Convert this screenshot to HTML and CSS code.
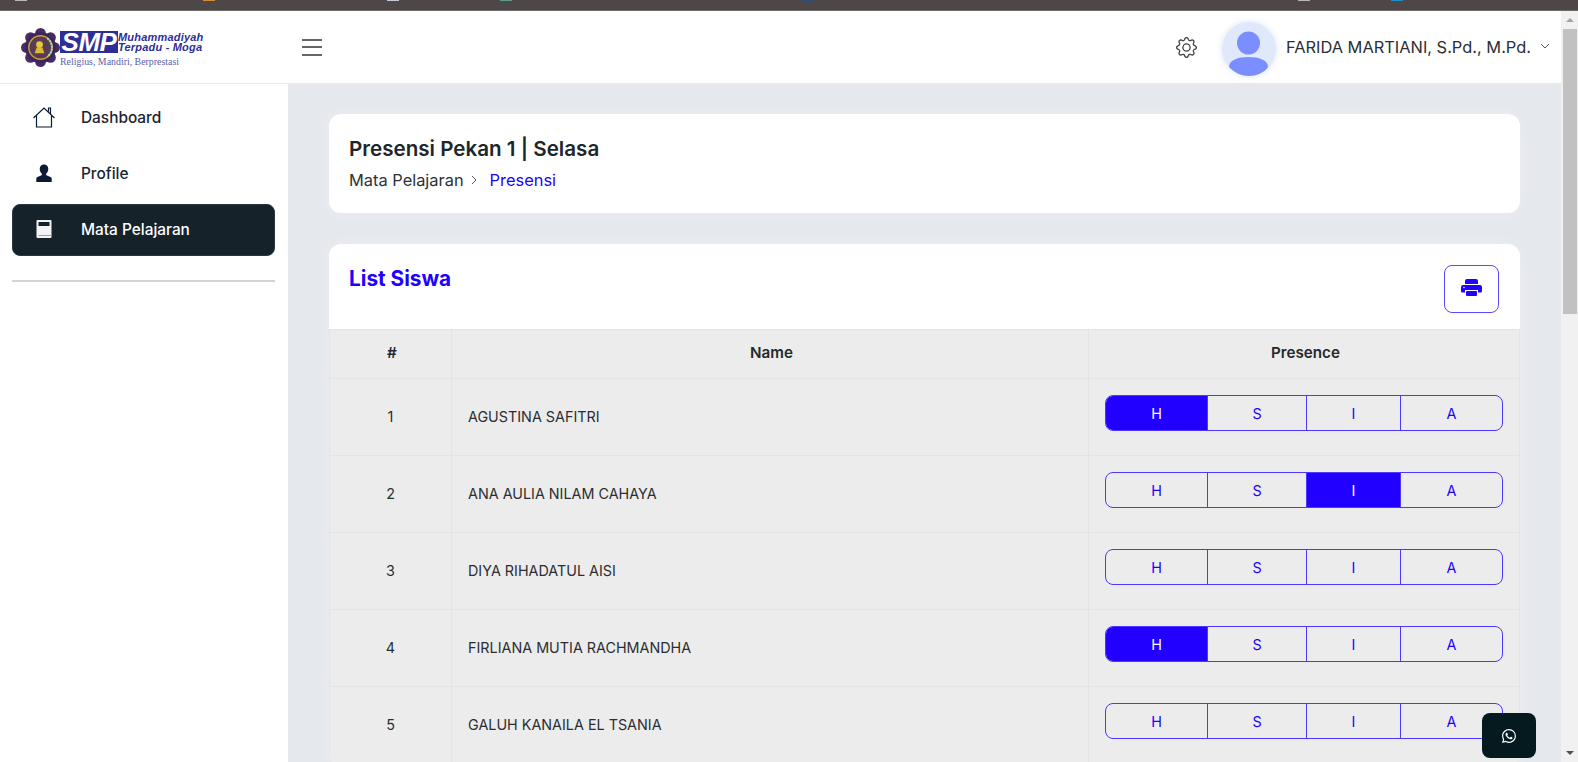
FILE: index.html
```html
<!DOCTYPE html>
<html lang="id">
<head>
  <meta charset="UTF-8">
  <title>Presensi</title>
  <link rel="stylesheet" href="styles.css">
</head>
<body>

<div class="strip"></div>

<div class="window">
  <div class="page">

    <!-- Header -->
    <header class="topbar">
      <div class="brand">
        <svg class="emblem" viewBox="0 0 40 40">
          <g fill="#4a2c63">
            <circle cx="20" cy="5.500" r="5.500"/><circle cx="30.250" cy="9.750" r="5.500"/><circle cx="34.500" cy="20" r="5.500"/><circle cx="30.250" cy="30.250" r="5.500"/>
            <circle cx="20" cy="34.500" r="5.500"/><circle cx="9.750" cy="30.250" r="5.500"/><circle cx="5.500" cy="20" r="5.500"/><circle cx="9.750" cy="9.750" r="5.500"/>
          </g>
          <circle cx="20" cy="20" r="16" fill="#3b2560"/>
          <circle cx="20" cy="20" r="12" fill="#5a3a55" stroke="#c9a227" stroke-width="1.500"/>
          <path d="M27 10.500a12 12 0 0 1 0 19" fill="none" stroke="#9be6bd" stroke-width="2" stroke-dasharray="2 1"/>
          <circle cx="19" cy="17" r="3.500" fill="#e6c83f"/>
          <path d="M14 26l2-6h6l2 6z" fill="#dcb92f"/>
        </svg>
        <div class="brand-text">
          <div class="brand-top">
            <span class="brand-smp">SMP</span>
            <span class="brand-name">Muhammadiyah<br>Terpadu - Moga</span>
          </div>
          <div class="brand-motto">Religius, Mandiri, Berprestasi</div>
        </div>
      </div>

      <button class="burger" aria-label="Menu"><span></span><span></span><span></span></button>

      <div class="topbar-right">
        <svg class="gear" viewBox="0 0 16 16" fill="#444">
          <path d="M8 4.754a3.246 3.246 0 1 0 0 6.492 3.246 3.246 0 0 0 0-6.492zM5.754 8a2.246 2.246 0 1 1 4.492 0 2.246 2.246 0 0 1-4.492 0z"/>
          <path d="M9.796 1.343c-.527-1.790-3.065-1.790-3.592 0l-.094.319a.873.873 0 0 1-1.255.520l-.292-.160c-1.640-.892-3.433.902-2.540 2.541l.159.292a.873.873 0 0 1-.520 1.255l-.319.094c-1.790.527-1.790 3.065 0 3.592l.319.094a.873.873 0 0 1 .520 1.255l-.160.292c-.892 1.640.901 3.434 2.541 2.540l.292-.159a.873.873 0 0 1 1.255.520l.094.319c.527 1.790 3.065 1.790 3.592 0l.094-.319a.873.873 0 0 1 1.255-.520l.292.160c1.640.893 3.434-.902 2.540-2.541l-.159-.292a.873.873 0 0 1 .520-1.255l.319-.094c1.790-.527 1.790-3.065 0-3.592l-.319-.094a.873.873 0 0 1-.520-1.255l.160-.292c.893-1.640-.902-3.433-2.541-2.540l-.292.159a.873.873 0 0 1-1.255-.520l-.094-.319zm-2.633.283c.246-.835 1.428-.835 1.674 0l.094.319a1.873 1.873 0 0 0 2.693 1.115l.291-.160c.764-.415 1.600.420 1.184 1.185l-.159.292a1.873 1.873 0 0 0 1.116 2.692l.318.094c.835.246.835 1.428 0 1.674l-.319.094a1.873 1.873 0 0 0-1.115 2.693l.160.291c.415.764-.420 1.600-1.185 1.184l-.291-.159a1.873 1.873 0 0 0-2.693 1.116l-.094.318c-.246.835-1.428.835-1.674 0l-.094-.319a1.873 1.873 0 0 0-2.692-1.115l-.292.160c-.764.415-1.600-.420-1.184-1.185l.159-.291A1.873 1.873 0 0 0 1.945 8.930l-.319-.094c-.835-.246-.835-1.428 0-1.674l.319-.094A1.873 1.873 0 0 0 3.060 4.377l-.160-.292c-.415-.764.420-1.600 1.185-1.184l.292.159a1.873 1.873 0 0 0 2.692-1.115l.094-.319z"/>
        </svg>
        <div class="avatar">
          <svg viewBox="0 0 54 54">
            <circle cx="26.500" cy="21" r="11.500" fill="#7b8eff"/>
            <path d="M7 45c0-7 9-10 19.500-10S46 38 46 45c-3 6-11 10-19.500 10S10 51 7 45z" fill="#7b8eff"/>
          </svg>
        </div>
        <span class="user-name">FARIDA MARTIANI, S.Pd., M.Pd.</span>
        <svg class="chevron" viewBox="0 0 10 6"><path d="M1 1l4 4 4-4" fill="none" stroke="#555" stroke-width="1"/></svg>
      </div>
    </header>

    <div class="body-row">

      <!-- Sidebar -->
      <aside class="sidebar">
        <nav class="menu">
          <a class="menu-item">
            <svg class="menu-icon" viewBox="0 0 24 24" fill="none" stroke="#0b1b34" stroke-width="1.200">
              <path d="M1.500 13L12 3l10.500 10M4.500 10.500V22h15V10.500M16.500 6.500V3h2v6"/>
            </svg>
            Dashboard
          </a>
          <a class="menu-item">
            <svg class="menu-icon" viewBox="0 0 24 24" fill="#0b1b34">
              <path d="M12 3.500c2.700 0 4.300 2 4.300 4.600 0 1.900-.8 3.500-2.100 4.500v1.300c0 .7 4.500 1.300 5.500 3V21H4.300v-4.100c1-1.700 5.500-2.300 5.500-3v-1.300C8.500 11.600 7.700 10 7.700 8.100c0-2.600 1.600-4.600 4.300-4.600z"/>
            </svg>
            Profile
          </a>
          <a class="menu-item active">
            <svg class="menu-icon" viewBox="0 0 24 24">
              <rect x="4.500" y="3" width="15" height="18" rx="1" fill="#f4f4f4"/>
              <rect x="6.500" y="5" width="11" height="4" fill="#15222a"/>
              <rect x="6.500" y="18" width="13" height="1" fill="#9aa3a8"/>
            </svg>
            Mata Pelajaran
          </a>
        </nav>
        <hr class="menu-divider">
      </aside>

      <!-- Isi -->
      <main class="content">
        <section class="card title-card">
          <h1>Presensi Pekan 1 | Selasa</h1>
          <div class="crumbs">
            <span>Mata Pelajaran</span>
            <svg class="crumb-sep" viewBox="0 0 6 10"><path d="M1 1l4 4-4 4" fill="none" stroke="#555" stroke-width="1"/></svg>
            <a>Presensi</a>
          </div>
        </section>

        <section class="card list-card">
          <div class="list-head">
            <h2>List Siswa</h2>
            <button class="print-btn" aria-label="Print">
              <svg viewBox="0 0 21 17" fill="#2200ff">
                <path d="M4 5V2a2 2 0 0 1 2-2h9a2 2 0 0 1 2 2v3z"/>
                <path d="M2 6h17a2 2 0 0 1 2 2v4a1.500 1.500 0 0 1-1.500 1.500H17V11H4v2.500H1.500A1.500 1.500 0 0 1 0 12V8a2 2 0 0 1 2-2z"/>
                <rect x="5" y="12" width="11" height="5" rx="1"/>
                <circle cx="3" cy="8.500" r=".8" fill="#fff"/>
              </svg>
            </button>
          </div>

          <table class="siswa">
            <thead>
              <tr><th class="col-no">#</th><th class="col-name">Name</th><th class="col-pres">Presence</th></tr>
            </thead>
            <tbody>
              <tr>
                <td class="col-no">1</td>
                <td class="student">AGUSTINA SAFITRI</td>
                <td><div class="presence"><button class="on">H</button><button>S</button><button>I</button><button>A</button></div></td>
              </tr>
              <tr>
                <td class="col-no">2</td>
                <td class="student">ANA AULIA NILAM CAHAYA</td>
                <td><div class="presence"><button>H</button><button>S</button><button class="on">I</button><button>A</button></div></td>
              </tr>
              <tr>
                <td class="col-no">3</td>
                <td class="student">DIYA RIHADATUL AISI</td>
                <td><div class="presence"><button>H</button><button>S</button><button>I</button><button>A</button></div></td>
              </tr>
              <tr>
                <td class="col-no">4</td>
                <td class="student">FIRLIANA MUTIA RACHMANDHA</td>
                <td><div class="presence"><button class="on">H</button><button>S</button><button>I</button><button>A</button></div></td>
              </tr>
              <tr>
                <td class="col-no">5</td>
                <td class="student">GALUH KANAILA EL TSANIA</td>
                <td><div class="presence"><button>H</button><button>S</button><button>I</button><button>A</button></div></td>
              </tr>
            </tbody>
          </table>
        </section>
      </main>
    </div>
  </div>

  <!-- Scrollbar -->
  <div class="scrollbar">
    <span class="arrow-up"></span>
    <span class="thumb"></span>
    <span class="arrow-down"></span>
  </div>
</div>

<a class="wa-btn" aria-label="WhatsApp">
  <svg viewBox="0 0 16 16" fill="#fff">
    <path d="M13.601 2.326A7.854 7.854 0 0 0 7.994 0C3.627 0 .068 3.558.064 7.926c0 1.399.366 2.760 1.057 3.965L0 16l4.204-1.102a7.933 7.933 0 0 0 3.790.965h.004c4.368 0 7.926-3.558 7.930-7.930A7.898 7.898 0 0 0 13.600 2.326zM7.994 14.521a6.573 6.573 0 0 1-3.356-.920l-.240-.144-2.494.654.666-2.433-.156-.251a6.560 6.560 0 0 1-1.007-3.505c0-3.626 2.957-6.584 6.591-6.584a6.560 6.560 0 0 1 4.660 1.931 6.557 6.557 0 0 1 1.928 4.660c-.004 3.639-2.961 6.592-6.592 6.592zm3.615-4.934c-.197-.099-1.170-.578-1.353-.646-.182-.065-.315-.099-.445.099-.133.197-.513.646-.627.775-.114.133-.232.148-.430.050-.197-.100-.836-.308-1.592-.985-.590-.525-.985-1.175-1.103-1.372-.114-.198-.011-.304.088-.403.087-.088.197-.232.296-.346.100-.114.133-.198.198-.330.065-.134.034-.248-.015-.347-.050-.099-.445-1.076-.612-1.470-.160-.389-.323-.335-.445-.340-.114-.007-.247-.007-.380-.007a.729.729 0 0 0-.529.247c-.182.198-.691.677-.691 1.654 0 .977.710 1.916.810 2.049.098.133 1.394 2.132 3.383 2.992.470.205.840.326 1.129.418.475.152.904.129 1.246.080.380-.058 1.171-.480 1.338-.943.164-.464.164-.860.114-.943-.049-.084-.182-.133-.380-.232z"/>
  </svg>
</a>

</body>
</html>
```

FILE: styles.css
```css
* {
  box-sizing: border-box;
}
html, body {
  height: 100%;
}
body {
  font-family: Inter, "Noto Sans", sans-serif;
  background: #e5e8ed;
  color: #212529;
  margin: 0;
  overflow: hidden;
  display: flex;
  flex-direction: column;
}
.strip {
  height: 11px;
  flex: none;
  background-color: #4d4747;
  border-bottom: 1px solid #6e6a6a;
  background-repeat: no-repeat;
  background-size: 12px 1px;
  background-image:
    linear-gradient(#b8b8b8, #b8b8b8),
    linear-gradient(#d98a3a, #d98a3a),
    linear-gradient(#c8c8d4, #c8c8d4),
    linear-gradient(#5f9a8a, #5f9a8a),
    linear-gradient(#2f4f7f, #2f4f7f),
    linear-gradient(#b8b8b8, #b8b8b8),
    linear-gradient(#1f8fc0, #1f8fc0);
  background-position: 15px 0, 203px 0, 387px 0, 500px 0, 802px 0, 1298px 0, 1391px 0;
}
.window {
  flex: 1;
  display: flex;
  min-height: 0;
}
.page {
  flex: 1;
  min-width: 0;
  display: flex;
  flex-direction: column;
}

/* header */
.topbar {
  height: 73px;
  flex: none;
  background: #fff;
  border-bottom: 1px solid #e8e9ec;
  display: flex;
  align-items: center;
  padding: 0 11px 0 21px;
}
.brand {
  width: 281px;
  display: flex;
  align-items: center;
}
.emblem {
  width: 39px;
  height: 39px;
  flex: none;
}
.brand-text {
  margin-top: 4px;
}
.brand-top {
  display: flex;
  align-items: center;
}
.brand-smp {
  width: 58px;
  height: 22px;
  background: #2e2f96;
  color: #fff;
  font: italic 700 26px/22px "Liberation Sans", sans-serif;
  text-align: center;
  letter-spacing: -0.5px;
}
.brand-name {
  font: italic 700 11px/10.500px "Liberation Sans", sans-serif;
  color: #2e2f96;
  letter-spacing: 0.2px;
  white-space: nowrap;
}
.brand-motto {
  font: 9.900px/11px "Liberation Serif", serif;
  color: #5a5fa8;
  margin-top: 3px;
}
.burger {
  width: 20px;
  height: 17px;
  padding: 0;
  border: none;
  background: none;
  display: flex;
  flex-direction: column;
  justify-content: space-between;
}
.burger span {
  display: block;
  height: 2px;
  background: #666;
}
.topbar-right {
  margin-left: auto;
  display: flex;
  align-items: center;
}
.gear {
  width: 21px;
  height: 21px;
  margin-right: 25px;
}
.avatar {
  width: 54px;
  height: 54px;
  margin-top: 3px;
  border-radius: 50%;
  background: #dfe9fb;
  box-shadow: 0 0 6px rgba(120, 140, 200, 0.25);
  overflow: hidden;
  margin-right: 10px;
}
.avatar svg {
  display: block;
  width: 100%;
  height: 100%;
}
.user-name {
  font-size: 16.400px;
  color: #2b2f33;
  margin-right: 9px;
}
.chevron {
  width: 10px;
  height: 6px;
  margin-top: -2px;
}

.body-row {
  flex: 1;
  display: flex;
  min-height: 0;
}

/* sidebar */
.sidebar {
  width: 288px;
  flex: none;
  background: #fff;
  padding: 8px 13px 0 12px;
}
.menu {
  display: flex;
  flex-direction: column;
  gap: 4px;
}
.menu-item {
  height: 52px;
  display: flex;
  align-items: center;
  padding-left: 20px;
  padding-bottom: 2px;
  border-radius: 8px;
  font-size: 15.400px;
  font-weight: 500;
  color: #1b2433;
}
.menu-item.active {
  background: #15222a;
  border: 1px solid #2b373e;
  padding-left: 19px;
  color: #fff;
}
.menu-icon {
  width: 24px;
  height: 24px;
  margin-right: 25px;
  flex: none;
}
.menu-divider {
  border: none;
  height: 2px;
  background: #d4d4d4;
  margin: 24px 0 0;
}

/* isi */
.content {
  flex: 1;
  min-width: 0;
  padding: 30px 41px 0;
  overflow: hidden;
}
.card {
  background: #fff;
  border-radius: 12px;
  box-shadow: 0 0 18px rgba(255, 255, 255, 0.25);
}
.title-card {
  height: 99px;
  padding: 21px 20px 0;
  margin-bottom: 31px;
}
h1 {
  margin: 0;
  font-size: 20.600px;
  line-height: 28px;
  font-weight: 600;
  color: #1c272c;
}
.crumbs {
  display: flex;
  align-items: center;
  margin-top: 5px;
  font-size: 16.400px;
  line-height: 24px;
  color: #2b3236;
}
.crumb-sep {
  width: 6px;
  height: 10px;
  margin: 0 13px 0 7px;
}
.crumbs a {
  color: #2200ff;
}
.list-card {
  overflow: hidden;
}
.list-head {
  height: 85px;
  padding: 21px 21px 0 20px;
  display: flex;
  justify-content: space-between;
  align-items: flex-start;
}
h2 {
  margin: 1px 0 0;
  font-size: 20.800px;
  line-height: 26px;
  font-weight: 700;
  color: #2200ff;
}
.print-btn {
  width: 55px;
  height: 48px;
  padding: 0 0 3px;
  background: #fff;
  border: 1px solid #5a48ff;
  border-radius: 8px;
}
.print-btn svg {
  display: block;
  width: 21px;
  height: 17px;
  margin: 0 auto;
}

/* tabel */
.siswa {
  width: 100%;
  border-collapse: collapse;
  table-layout: fixed;
  background: #ececec;
  font-size: 14.350px;
}
.siswa th, .siswa td {
  border: 1px solid #e2e4e7;
  text-align: center;
}
.siswa thead th {
  height: 49px;
  padding: 0 0 4px 3px;
  font-size: 15.200px;
  font-weight: 600;
  color: #26292c;
}
.siswa tbody td {
  height: 77px;
  padding-bottom: 2px;
  color: #2b2e31;
}
.col-no {
  width: 122px;
}
.col-name {
  width: 637px;
}
.siswa td.student {
  text-align: left;
  padding-left: 16px;
}
.presence {
  display: grid;
  grid-template-columns: 101px 99px 94px 1fr;
  height: 36px;
  width: 398px;
  margin: 0 0 7px 15px;
  border-radius: 8px;
  overflow: hidden;
  border: 1px solid #4c38ff;
}
.presence button {
  padding: 0;
  border: none;
  border-left: 1px solid #4c38ff;
  background: transparent;
  color: #2200ff;
  font-family: inherit;
  font-size: 14.350px;
}
.presence button:first-child {
  border-left: none;
}
.presence button.on {
  background: #2200ff;
  color: #fff;
}

/* scrollbar */
.scrollbar {
  width: 17px;
  flex: none;
  background: #f1f1f1;
  display: flex;
  flex-direction: column;
  align-items: stretch;
}
.thumb {
  height: 285px;
  background: #c1c1c1;
  margin: 1px 1px 0 2px;
}
.arrow-up, .arrow-down {
  width: 0;
  height: 0;
  align-self: center;
  border-left: 4px solid transparent;
  border-right: 4px solid transparent;
}
.arrow-up {
  border-bottom: 4px solid #a3a3a3;
  margin-top: 7px;
  margin-bottom: 6px;
}
.arrow-down {
  border-top: 4px solid #505050;
  margin-top: auto;
  margin-bottom: 7px;
}

/* tombol whatsapp */
.wa-btn {
  position: fixed;
  left: 1482px;
  top: 713px;
  width: 54px;
  height: 45px;
  background: #041a1e;
  border-radius: 8px;
  display: flex;
  align-items: center;
  justify-content: center;
}
.wa-btn svg {
  width: 14px;
  height: 14px;
}
```
